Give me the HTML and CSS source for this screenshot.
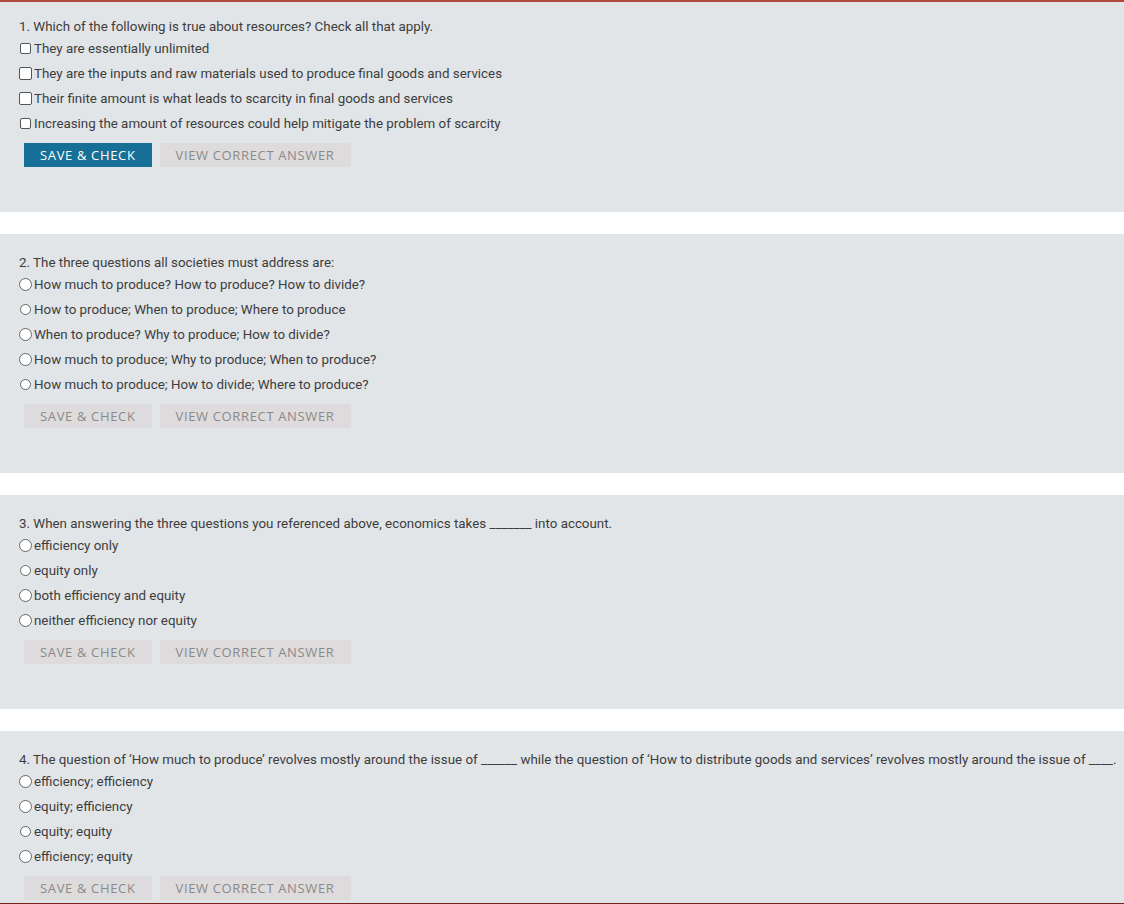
FILE: index.html
```html
<!DOCTYPE html>
<html lang="en">
<head>
    <meta charset="UTF-8">
    <title>Economics Quiz</title>
    <link rel="stylesheet" href="styles.css">
</head>
<body>

    <div class="page">

        <!-- Question 1 -->
        <div class="question">
            <p class="prompt">1. Which of the following is true about resources? Check all that apply.</p>
            <label class="option"><span class="box small"></span>They are essentially unlimited</label>
            <label class="option"><span class="box"></span>They are the inputs and raw materials used to produce final goods and services</label>
            <label class="option"><span class="box"></span>Their finite amount is what leads to scarcity in final goods and services</label>
            <label class="option"><span class="box small"></span>Increasing the amount of resources could help mitigate the problem of scarcity</label>
            <div class="actions">
                <button class="btn btn-primary">Save &amp; Check</button>
                <button class="btn">View Correct Answer</button>
            </div>
        </div>

        <!-- Question 2 -->
        <div class="question">
            <p class="prompt">2. The three questions all societies must address are:</p>
            <label class="option"><span class="radio"></span>How much to produce? How to produce? How to divide?</label>
            <label class="option"><span class="radio small"></span>How to produce; When to produce; Where to produce</label>
            <label class="option"><span class="radio"></span>When to produce? Why to produce; How to divide?</label>
            <label class="option"><span class="radio"></span>How much to produce; Why to produce; When to produce?</label>
            <label class="option"><span class="radio small"></span>How much to produce; How to divide; Where to produce?</label>
            <div class="actions">
                <button class="btn">Save &amp; Check</button>
                <button class="btn">View Correct Answer</button>
            </div>
        </div>

        <!-- Question 3 -->
        <div class="question">
            <p class="prompt">3. When answering the three questions you referenced above, economics takes _______ into account.</p>
            <label class="option"><span class="radio"></span>efficiency only</label>
            <label class="option"><span class="radio small"></span>equity only</label>
            <label class="option"><span class="radio"></span>both efficiency and equity</label>
            <label class="option"><span class="radio"></span>neither efficiency nor equity</label>
            <div class="actions">
                <button class="btn">Save &amp; Check</button>
                <button class="btn">View Correct Answer</button>
            </div>
        </div>

        <!-- Question 4 -->
        <div class="question">
            <p class="prompt">4. The question of ‘How much to produce’ revolves mostly around the issue of ______ while the question of ‘How to distribute goods and services’ revolves mostly around the issue of ____.</p>
            <label class="option"><span class="radio"></span>efficiency; efficiency</label>
            <label class="option"><span class="radio"></span>equity; efficiency</label>
            <label class="option"><span class="radio small"></span>equity; equity</label>
            <label class="option"><span class="radio"></span>efficiency; equity</label>
            <div class="actions">
                <button class="btn">Save &amp; Check</button>
                <button class="btn">View Correct Answer</button>
            </div>
        </div>

    </div>

</body>
</html>
```

FILE: styles.css
```css
/* Reset */
* {
    margin: 0;
    padding: 0;
    box-sizing: border-box;
}

body {
    background: #ffffff;
    font-family: Roboto, 'Liberation Sans', sans-serif;
    font-size: 13.35px;
    color: #3d3d3d;
}

/* Page frame */
.page {
    height: 904px;
    overflow: hidden;
    border-top: 2px solid #b0493c;
    border-bottom: 1px solid #7a1f1a;
    display: flex;
    flex-direction: column;
    gap: 22px;
}

/* Question card */
.question {
    flex-shrink: 0;
    background: #e1e5e8;
    padding: 18px 0 45px 19px;
}

.question:first-child {
    padding-top: 14px;
}

.prompt {
    line-height: 20px;
    padding-top: 1px;
    margin-bottom: -1px;
    white-space: nowrap;
}

.option {
    display: flex;
    align-items: center;
    height: 25px;
}

/* Fake inputs */
.box,
.radio {
    flex-shrink: 0;
    width: 13px;
    height: 13px;
    margin-right: 2px;
    border: 1px solid #555555;
    background: #ffffff;
}

.box {
    border-radius: 2px;
}

.box.small {
    width: 11px;
    height: 11px;
    margin: 0 3px 0 1px;
}

.radio {
    border-radius: 50%;
    border-color: #666666;
}

.radio.small {
    width: 11px;
    height: 11px;
    margin: 0 3px 0 1px;
}

/* Buttons */
.actions {
    display: flex;
    gap: 8px;
    margin: 7px 0 0 5px;
}

.btn {
    height: 24px;
    padding: 0 16px;
    border: none;
    background: #dddbdb;
    color: #8a8a8a;
    font-family: 'Open Sans', 'Liberation Sans', sans-serif;
    font-size: 13px;
    text-transform: uppercase;
    letter-spacing: 0.65px;
    cursor: pointer;
}

.btn-primary {
    background: #156f97;
    color: #ffffff;
}
```
